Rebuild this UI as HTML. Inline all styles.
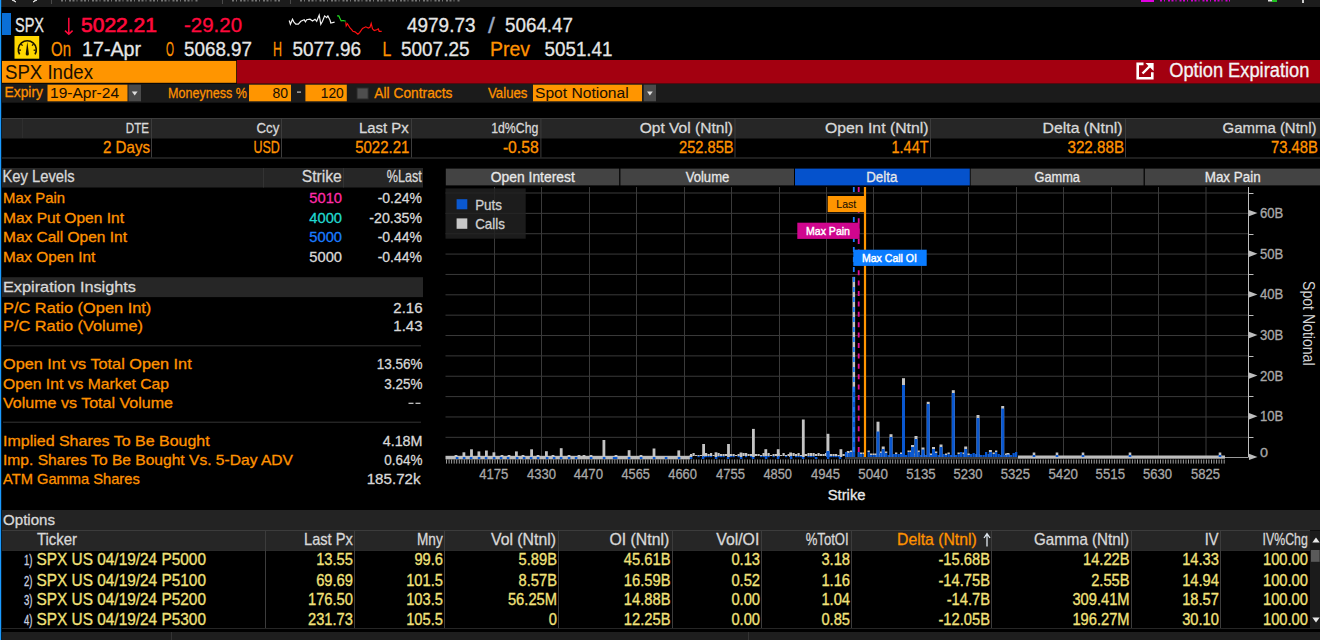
<!DOCTYPE html>
<html><head><meta charset="utf-8"><style>
html,body{margin:0;padding:0;background:#000;width:1320px;height:640px;overflow:hidden}
svg{display:block}
text{font-family:"Liberation Sans",sans-serif;white-space:pre}
</style></head><body>
<svg width="1320" height="640" viewBox="0 0 1320 640">
<rect x="0" y="0" width="1320" height="640" fill="#000" />
<rect x="0" y="0" width="1320" height="7" fill="#1c1c1c" />
<line x1="51.5" y1="0" x2="51.5" y2="4" stroke="#4a4a4a" stroke-width="1" />
<line x1="222.5" y1="0" x2="222.5" y2="4" stroke="#4a4a4a" stroke-width="1" />
<line x1="290.5" y1="0" x2="290.5" y2="4" stroke="#4a4a4a" stroke-width="1" />
<path d="M12,0 L16,2 L13.5,0 Z M37,0 L33,2 L35.5,0 Z" fill="#ddd" stroke="#ddd" stroke-width="1"/>
<line x1="61" y1="0.8" x2="198" y2="0.8" stroke="#9a9a9a" stroke-width="1.6" stroke-dasharray="2 2 1 3 2 1.5" opacity="0.7"/>
<line x1="232" y1="0.8" x2="280" y2="0.8" stroke="#9a9a9a" stroke-width="1.6" stroke-dasharray="2 2 1 3 2 1.5" opacity="0.7"/>
<line x1="300" y1="0.8" x2="460" y2="0.8" stroke="#9a9a9a" stroke-width="1.6" stroke-dasharray="2 2 1 3 2 1.5" opacity="0.7"/>
<rect x="1141" y="0" width="13" height="2" fill="#e000e0" />
<line x1="1160" y1="0.7" x2="1230" y2="0.7" stroke="#d000d0" stroke-width="1.4" stroke-dasharray="2 2 1 3 2 1.5"/>
<rect x="1268" y="0" width="4" height="1.5" fill="#ddd" />
<rect x="1272" y="0" width="5" height="2" fill="#20c020" />
<rect x="1302" y="0" width="2" height="3" fill="#ccc" />
<rect x="0" y="0" width="1.2" height="640" fill="#1a9aff" />
<rect x="2" y="13" width="9" height="22" fill="#0a6fd6" />
<text x="15.00" y="32.00" font-size="21.08" fill="#e6e6e6" stroke="#e6e6e6" stroke-width="0.3" font-weight="normal" textLength="29.02" lengthAdjust="spacingAndGlyphs">SPX</text>
<path d="M68.8,17.7 V33.6 M65,30.6 L68.8,34.2 L72.6,30.6" fill="none" stroke="#ff0a3c" stroke-width="1.5"/>
<text x="81.00" y="32.00" font-size="20.35" fill="#ff0a3c" stroke="#ff0a3c" stroke-width="0.65" font-weight="normal" textLength="76.00" lengthAdjust="spacingAndGlyphs">5022.21</text>
<text x="184.00" y="32.00" font-size="20.35" fill="#ff0a3c" stroke="#ff0a3c" stroke-width="0.3" font-weight="normal" textLength="58.01" lengthAdjust="spacingAndGlyphs">-29.20</text>
<text x="407.00" y="32.00" font-size="21.08" fill="#e6e6e6" stroke="#e6e6e6" stroke-width="0.3" font-weight="normal" textLength="68.50" lengthAdjust="spacingAndGlyphs">4979.73</text>
<text x="488.00" y="33.00" font-size="22.53" fill="#9aa8c0" stroke="#9aa8c0" stroke-width="0.3" font-weight="normal" textLength="6.95" lengthAdjust="spacingAndGlyphs">/</text>
<text x="505.00" y="32.00" font-size="21.08" fill="#e6e6e6" stroke="#e6e6e6" stroke-width="0.3" font-weight="normal" textLength="68.00" lengthAdjust="spacingAndGlyphs">5064.47</text>
<polyline points="289.2,20.5 290.4,24.2 292.5,19.2 293.8,21.8 295.8,24.2 298.3,24.2 300.8,21.3 304.2,19.7 305.4,21.8 306.7,19.7 310.0,19.2 312.5,20.9 315.0,19.2 316.7,21.3 319.2,15.1 320.8,24.2 322.5,21.3 324.6,15.9 326.7,17.6 327.9,15.9 330.0,20.1 330.8,23.0 334.6,22.2" fill="none" stroke="#f0f0f0" stroke-width="1.2"/>
<polyline points="337.1,15.9 338.8,15.9 340.0,18.4 341.2,20.9 343.3,20.5 345.8,21.3" fill="none" stroke="#22dd22" stroke-width="1.2"/>
<polyline points="345.8,22.2 346.2,25.9 347.5,23.8 350.0,28.0 351.7,29.7 352.9,31.3 355.0,31.8 357.9,34.2 359.6,32.6 362.5,28.4 365.8,26.8 368.3,28.0 370.0,27.2 371.2,23.4 372.5,28.8 374.2,30.5 376.7,29.7 378.3,28.8 379.2,31.3 381.7,31.3" fill="none" stroke="#ff1010" stroke-width="1.2"/>
<rect x="14.5" y="36" width="24.7" height="22.7" fill="#ffd700" />
<path d="M19.6,54.4 A9.0,9.0 0 1 1 35.0,54.4" fill="none" stroke="#1a1400" stroke-width="1.6"/>
<path d="M25.7,54.0 L27.3,41.8 L28.9,54.0 A1.6,1.6 0 0 1 25.7,54.0 Z" fill="#1a1400"/>
<g stroke="#1a1400" stroke-width="1.3"><line x1="19" y1="50.2" x2="21" y2="50.2"/><line x1="35.6" y1="50.2" x2="33.6" y2="50.2"/><line x1="21.2" y1="44.2" x2="22.6" y2="45.6"/><line x1="33.4" y1="44.2" x2="32" y2="45.6"/></g>
<text x="51.00" y="56.00" font-size="21.08" fill="#ff9200" stroke="#ff9200" stroke-width="0.3" font-weight="normal" textLength="19.98" lengthAdjust="spacingAndGlyphs">On</text>
<text x="82.00" y="56.00" font-size="21.08" fill="#e6e6e6" stroke="#e6e6e6" stroke-width="0.3" font-weight="normal" textLength="59.03" lengthAdjust="spacingAndGlyphs">17-Apr</text>
<text x="166.00" y="56.00" font-size="21.08" fill="#ff9200" stroke="#ff9200" stroke-width="0.3" font-weight="normal" textLength="7.98" lengthAdjust="spacingAndGlyphs">O</text>
<text x="184.00" y="56.00" font-size="21.08" fill="#e6e6e6" stroke="#e6e6e6" stroke-width="0.3" font-weight="normal" textLength="68.00" lengthAdjust="spacingAndGlyphs">5068.97</text>
<text x="273.00" y="56.00" font-size="21.08" fill="#ff9200" stroke="#ff9200" stroke-width="0.3" font-weight="normal" textLength="9.03" lengthAdjust="spacingAndGlyphs">H</text>
<text x="292.50" y="56.00" font-size="21.08" fill="#e6e6e6" stroke="#e6e6e6" stroke-width="0.3" font-weight="normal" textLength="68.50" lengthAdjust="spacingAndGlyphs">5077.96</text>
<text x="382.60" y="56.00" font-size="21.08" fill="#ff9200" stroke="#ff9200" stroke-width="0.3" font-weight="normal" textLength="8.82" lengthAdjust="spacingAndGlyphs">L</text>
<text x="401.00" y="56.00" font-size="21.08" fill="#e6e6e6" stroke="#e6e6e6" stroke-width="0.3" font-weight="normal" textLength="68.50" lengthAdjust="spacingAndGlyphs">5007.25</text>
<text x="490.00" y="56.00" font-size="21.08" fill="#ff9200" stroke="#ff9200" stroke-width="0.3" font-weight="normal" textLength="40.02" lengthAdjust="spacingAndGlyphs">Prev</text>
<text x="544.50" y="56.00" font-size="21.08" fill="#e6e6e6" stroke="#e6e6e6" stroke-width="0.3" font-weight="normal" textLength="68.00" lengthAdjust="spacingAndGlyphs">5051.41</text>
<rect x="236.9" y="60" width="1083.1" height="23.7" fill="#a30010" />
<rect x="2" y="60.9" width="234.2" height="21.9" fill="#ff9500" />
<text x="5.00" y="78.50" font-size="20.35" fill="#1a1000" stroke="#1a1000" stroke-width="0.05" font-weight="normal" textLength="88.00" lengthAdjust="spacingAndGlyphs">SPX Index</text>
<path d="M1143.5,63.9 H1137.7 V78.2 H1152.3 V72.2" fill="none" stroke="#fff" stroke-width="2.6"/>
<path d="M1142.5,73.5 L1150.5,65.5" stroke="#fff" stroke-width="2.4"/><path d="M1145.5,63 H1153.6 V71 Z" fill="#fff"/>
<text x="1169.20" y="77.40" font-size="19.33" fill="#f4f4f4" stroke="#f4f4f4" stroke-width="0.3" font-weight="normal" textLength="140.22" lengthAdjust="spacingAndGlyphs">Option Expiration</text>
<rect x="2" y="83.7" width="1318" height="19" fill="#1b1b1b" />
<text x="4.50" y="97.00" font-size="14.54" fill="#ff9200" stroke="#ff9200" stroke-width="0.3" font-weight="normal" textLength="38.48" lengthAdjust="spacingAndGlyphs">Expiry</text>
<rect x="47.5" y="84.7" width="80" height="16.6" fill="#ff9500" />
<text x="50.00" y="97.70" font-size="15.55" fill="#1a1000" stroke="#1a1000" stroke-width="0.05" font-weight="normal" textLength="69.03" lengthAdjust="spacingAndGlyphs">19-Apr-24</text>
<rect x="128.5" y="84.7" width="12.5" height="16.6" fill="#4a4a4a" />
<path d="M131.8,91.5 H137.6 L134.7,95.5 Z" fill="#ddd"/>
<text x="168.00" y="97.70" font-size="15.55" fill="#ff9200" stroke="#ff9200" stroke-width="0.3" font-weight="normal" textLength="79.01" lengthAdjust="spacingAndGlyphs">Moneyness %</text>
<rect x="249" y="84.7" width="42" height="16.6" fill="#ff9500" />
<text x="272.50" y="97.60" font-size="14.39" fill="#1a1000" stroke="#1a1000" stroke-width="0.05" font-weight="normal" textLength="15.53" lengthAdjust="spacingAndGlyphs">80</text>
<rect x="297" y="91.5" width="4" height="1.2" fill="#c8c8c8" />
<rect x="305.4" y="84.7" width="41.4" height="16.6" fill="#ff9500" />
<text x="320.80" y="97.60" font-size="14.39" fill="#1a1000" stroke="#1a1000" stroke-width="0.05" font-weight="normal" textLength="22.98" lengthAdjust="spacingAndGlyphs">120</text>
<rect x="357" y="88" width="11.2" height="11" fill="#4e4e4e" stroke="#2a2a2a" stroke-width="1"/>
<text x="374.30" y="97.60" font-size="15.41" fill="#ff9200" stroke="#ff9200" stroke-width="0.3" font-weight="normal" textLength="78.18" lengthAdjust="spacingAndGlyphs">All Contracts</text>
<text x="488.00" y="97.60" font-size="15.41" fill="#ff9200" stroke="#ff9200" stroke-width="0.3" font-weight="normal" textLength="39.48" lengthAdjust="spacingAndGlyphs">Values</text>
<rect x="533" y="84.7" width="109" height="16.6" fill="#ff9500" />
<text x="535.00" y="97.70" font-size="15.55" fill="#1a1000" stroke="#1a1000" stroke-width="0.05" font-weight="normal" textLength="93.69" lengthAdjust="spacingAndGlyphs">Spot Notional</text>
<rect x="643.7" y="84.7" width="12.3" height="16.6" fill="#4a4a4a" />
<path d="M647,91.5 H652.8 L649.9,95.5 Z" fill="#ddd"/>
<rect x="2" y="118" width="1318" height="20.5" fill="#262626" />
<line x1="2" y1="118.5" x2="1320" y2="118.5" stroke="#3c3c3c" stroke-width="1" />
<line x1="2" y1="158" x2="1320" y2="158" stroke="#3c3c3c" stroke-width="1" />
<line x1="151.5" y1="118" x2="151.5" y2="157.5" stroke="#3c3c3c" stroke-width="1" />
<line x1="281.5" y1="118" x2="281.5" y2="157.5" stroke="#3c3c3c" stroke-width="1" />
<line x1="411.5" y1="118" x2="411.5" y2="157.5" stroke="#3c3c3c" stroke-width="1" />
<line x1="540.9" y1="118" x2="540.9" y2="157.5" stroke="#3c3c3c" stroke-width="1" />
<line x1="735.0" y1="118" x2="735.0" y2="157.5" stroke="#3c3c3c" stroke-width="1" />
<line x1="930.5" y1="118" x2="930.5" y2="157.5" stroke="#3c3c3c" stroke-width="1" />
<line x1="1125.5" y1="118" x2="1125.5" y2="157.5" stroke="#3c3c3c" stroke-width="1" />
<line x1="22.5" y1="119" x2="22.5" y2="138" stroke="#2e2e2e" stroke-width="1" />
<text x="125.80" y="132.50" font-size="15.26" fill="#d8d8d8" stroke="#d8d8d8" stroke-width="0.3" font-weight="normal" textLength="23.20" lengthAdjust="spacingAndGlyphs">DTE</text>
<text x="256.50" y="132.50" font-size="15.26" fill="#d8d8d8" stroke="#d8d8d8" stroke-width="0.3" font-weight="normal" textLength="22.73" lengthAdjust="spacingAndGlyphs">Ccy</text>
<text x="359.00" y="132.50" font-size="15.26" fill="#d8d8d8" stroke="#d8d8d8" stroke-width="0.3" font-weight="normal" textLength="49.60" lengthAdjust="spacingAndGlyphs">Last Px</text>
<text x="491.20" y="132.50" font-size="15.26" fill="#d8d8d8" stroke="#d8d8d8" stroke-width="0.3" font-weight="normal" textLength="47.11" lengthAdjust="spacingAndGlyphs">1d%Chg</text>
<text x="639.70" y="132.50" font-size="15.26" fill="#d8d8d8" stroke="#d8d8d8" stroke-width="0.3" font-weight="normal" textLength="93.33" lengthAdjust="spacingAndGlyphs">Opt Vol (Ntnl)</text>
<text x="825.00" y="132.50" font-size="15.26" fill="#d8d8d8" stroke="#d8d8d8" stroke-width="0.3" font-weight="normal" textLength="103.47" lengthAdjust="spacingAndGlyphs">Open Int (Ntnl)</text>
<text x="1042.50" y="132.50" font-size="15.26" fill="#d8d8d8" stroke="#d8d8d8" stroke-width="0.3" font-weight="normal" textLength="80.03" lengthAdjust="spacingAndGlyphs">Delta (Ntnl)</text>
<text x="1222.50" y="132.50" font-size="15.26" fill="#d8d8d8" stroke="#d8d8d8" stroke-width="0.3" font-weight="normal" textLength="93.98" lengthAdjust="spacingAndGlyphs">Gamma (Ntnl)</text>
<text x="103.00" y="153.00" font-size="15.99" fill="#ff9200" stroke="#ff9200" stroke-width="0.3" font-weight="normal" textLength="47.04" lengthAdjust="spacingAndGlyphs">2 Days</text>
<text x="253.40" y="153.00" font-size="15.99" fill="#ff9200" stroke="#ff9200" stroke-width="0.3" font-weight="normal" textLength="26.32" lengthAdjust="spacingAndGlyphs">USD</text>
<text x="355.20" y="153.00" font-size="15.99" fill="#ff9200" stroke="#ff9200" stroke-width="0.3" font-weight="normal" textLength="54.10" lengthAdjust="spacingAndGlyphs">5022.21</text>
<text x="502.90" y="153.00" font-size="15.99" fill="#ff9200" stroke="#ff9200" stroke-width="0.3" font-weight="normal" textLength="35.79" lengthAdjust="spacingAndGlyphs">-0.58</text>
<text x="679.00" y="153.00" font-size="15.99" fill="#ff9200" stroke="#ff9200" stroke-width="0.3" font-weight="normal" textLength="54.61" lengthAdjust="spacingAndGlyphs">252.85B</text>
<text x="891.50" y="153.00" font-size="15.99" fill="#ff9200" stroke="#ff9200" stroke-width="0.3" font-weight="normal" textLength="37.03" lengthAdjust="spacingAndGlyphs">1.44T</text>
<text x="1067.50" y="153.00" font-size="15.99" fill="#ff9200" stroke="#ff9200" stroke-width="0.3" font-weight="normal" textLength="56.51" lengthAdjust="spacingAndGlyphs">322.88B</text>
<text x="1271.00" y="153.00" font-size="15.99" fill="#ff9200" stroke="#ff9200" stroke-width="0.3" font-weight="normal" textLength="46.99" lengthAdjust="spacingAndGlyphs">73.48B</text>
<rect x="2" y="168" width="421" height="19.5" fill="#262626" />
<line x1="263.5" y1="168" x2="263.5" y2="187.5" stroke="#333" stroke-width="1" />
<line x1="343.5" y1="168" x2="343.5" y2="187.5" stroke="#333" stroke-width="1" />
<text x="2.50" y="182.30" font-size="15.70" fill="#d8d8d8" stroke="#d8d8d8" stroke-width="0.3" font-weight="normal" textLength="72.23" lengthAdjust="spacingAndGlyphs">Key Levels</text>
<text x="301.70" y="182.30" font-size="15.70" fill="#d8d8d8" stroke="#d8d8d8" stroke-width="0.3" font-weight="normal" textLength="40.02" lengthAdjust="spacingAndGlyphs">Strike</text>
<text x="386.70" y="182.30" font-size="15.70" fill="#d8d8d8" stroke="#d8d8d8" stroke-width="0.3" font-weight="normal" textLength="34.99" lengthAdjust="spacingAndGlyphs">%Last</text>
<text x="3.00" y="202.70" font-size="14.54" fill="#ff9200" stroke="#ff9200" stroke-width="0.3" font-weight="normal" textLength="61.98" lengthAdjust="spacingAndGlyphs">Max Pain</text>
<text x="309.30" y="202.70" font-size="14.54" fill="#ff2aa8" stroke="#ff2aa8" stroke-width="0.3" font-weight="normal" textLength="32.70" lengthAdjust="spacingAndGlyphs">5010</text>
<text x="377.70" y="202.70" font-size="14.54" fill="#d8d8d8" stroke="#d8d8d8" stroke-width="0.3" font-weight="normal" textLength="44.28" lengthAdjust="spacingAndGlyphs">-0.24%</text>
<text x="3.00" y="222.70" font-size="14.54" fill="#ff9200" stroke="#ff9200" stroke-width="0.3" font-weight="normal" textLength="121.03" lengthAdjust="spacingAndGlyphs">Max Put Open Int</text>
<text x="309.30" y="222.70" font-size="14.54" fill="#20d8d0" stroke="#20d8d0" stroke-width="0.3" font-weight="normal" textLength="32.70" lengthAdjust="spacingAndGlyphs">4000</text>
<text x="369.30" y="222.70" font-size="14.54" fill="#d8d8d8" stroke="#d8d8d8" stroke-width="0.3" font-weight="normal" textLength="52.70" lengthAdjust="spacingAndGlyphs">-20.35%</text>
<text x="3.00" y="242.30" font-size="14.54" fill="#ff9200" stroke="#ff9200" stroke-width="0.3" font-weight="normal" textLength="123.98" lengthAdjust="spacingAndGlyphs">Max Call Open Int</text>
<text x="309.30" y="242.30" font-size="14.54" fill="#1a7cff" stroke="#1a7cff" stroke-width="0.3" font-weight="normal" textLength="32.70" lengthAdjust="spacingAndGlyphs">5000</text>
<text x="377.70" y="242.30" font-size="14.54" fill="#d8d8d8" stroke="#d8d8d8" stroke-width="0.3" font-weight="normal" textLength="44.28" lengthAdjust="spacingAndGlyphs">-0.44%</text>
<text x="3.00" y="261.70" font-size="14.54" fill="#ff9200" stroke="#ff9200" stroke-width="0.3" font-weight="normal" textLength="92.27" lengthAdjust="spacingAndGlyphs">Max Open Int</text>
<text x="309.30" y="261.70" font-size="14.54" fill="#d8d8d8" stroke="#d8d8d8" stroke-width="0.3" font-weight="normal" textLength="32.70" lengthAdjust="spacingAndGlyphs">5000</text>
<text x="377.70" y="261.70" font-size="14.54" fill="#d8d8d8" stroke="#d8d8d8" stroke-width="0.3" font-weight="normal" textLength="44.28" lengthAdjust="spacingAndGlyphs">-0.44%</text>
<rect x="2" y="277.2" width="421" height="19.9" fill="#262626" />
<text x="3.00" y="291.70" font-size="15.55" fill="#d8d8d8" stroke="#d8d8d8" stroke-width="0.3" font-weight="normal" textLength="133.02" lengthAdjust="spacingAndGlyphs">Expiration Insights</text>
<text x="3.00" y="312.70" font-size="14.97" fill="#ff9200" stroke="#ff9200" stroke-width="0.3" font-weight="normal" textLength="148.29" lengthAdjust="spacingAndGlyphs">P/C Ratio (Open Int)</text>
<text x="393.30" y="312.70" font-size="14.97" fill="#d8d8d8" stroke="#d8d8d8" stroke-width="0.3" font-weight="normal" textLength="29.22" lengthAdjust="spacingAndGlyphs">2.16</text>
<text x="3.00" y="330.70" font-size="14.97" fill="#ff9200" stroke="#ff9200" stroke-width="0.3" font-weight="normal" textLength="139.98" lengthAdjust="spacingAndGlyphs">P/C Ratio (Volume)</text>
<text x="393.30" y="330.70" font-size="14.97" fill="#d8d8d8" stroke="#d8d8d8" stroke-width="0.3" font-weight="normal" textLength="29.22" lengthAdjust="spacingAndGlyphs">1.43</text>
<text x="3.00" y="369.30" font-size="14.97" fill="#ff9200" stroke="#ff9200" stroke-width="0.3" font-weight="normal" textLength="188.69" lengthAdjust="spacingAndGlyphs">Open Int vs Total Open Int</text>
<text x="376.70" y="369.30" font-size="14.97" fill="#d8d8d8" stroke="#d8d8d8" stroke-width="0.3" font-weight="normal" textLength="45.82" lengthAdjust="spacingAndGlyphs">13.56%</text>
<text x="3.00" y="388.90" font-size="14.97" fill="#ff9200" stroke="#ff9200" stroke-width="0.3" font-weight="normal" textLength="166.00" lengthAdjust="spacingAndGlyphs">Open Int vs Market Cap</text>
<text x="384.30" y="388.90" font-size="14.97" fill="#d8d8d8" stroke="#d8d8d8" stroke-width="0.3" font-weight="normal" textLength="38.21" lengthAdjust="spacingAndGlyphs">3.25%</text>
<text x="3.00" y="407.50" font-size="14.97" fill="#ff9200" stroke="#ff9200" stroke-width="0.3" font-weight="normal" textLength="169.98" lengthAdjust="spacingAndGlyphs">Volume vs Total Volume</text>
<rect x="408.5" y="402.7" width="5" height="1.2" fill="#d0d0d0" />
<rect x="415.5" y="402.7" width="5" height="1.2" fill="#d0d0d0" />
<text x="3.00" y="445.60" font-size="14.97" fill="#ff9200" stroke="#ff9200" stroke-width="0.3" font-weight="normal" textLength="206.69" lengthAdjust="spacingAndGlyphs">Implied Shares To Be Bought</text>
<text x="382.70" y="445.60" font-size="14.97" fill="#d8d8d8" stroke="#d8d8d8" stroke-width="0.3" font-weight="normal" textLength="39.79" lengthAdjust="spacingAndGlyphs">4.18M</text>
<text x="3.00" y="465.40" font-size="14.97" fill="#ff9200" stroke="#ff9200" stroke-width="0.3" font-weight="normal" textLength="289.96" lengthAdjust="spacingAndGlyphs">Imp. Shares To Be Bought Vs. 5-Day ADV</text>
<text x="384.30" y="465.40" font-size="14.97" fill="#d8d8d8" stroke="#d8d8d8" stroke-width="0.3" font-weight="normal" textLength="38.21" lengthAdjust="spacingAndGlyphs">0.64%</text>
<text x="3.00" y="484.00" font-size="14.97" fill="#ff9200" stroke="#ff9200" stroke-width="0.3" font-weight="normal" textLength="136.73" lengthAdjust="spacingAndGlyphs">ATM Gamma Shares</text>
<text x="366.70" y="484.00" font-size="14.97" fill="#d8d8d8" stroke="#d8d8d8" stroke-width="0.3" font-weight="normal" textLength="53.90" lengthAdjust="spacingAndGlyphs">185.72k</text>
<line x1="3" y1="345.8" x2="421" y2="345.8" stroke="#353535" stroke-width="1" />
<line x1="3" y1="422.2" x2="421" y2="422.2" stroke="#353535" stroke-width="1" />
<rect x="445.8" y="168.6" width="173.40000000000003" height="16.8" fill="#434343" />
<text x="490.70" y="181.50" font-size="14.83" fill="#e8e8e8" stroke="#e8e8e8" stroke-width="0.3" font-weight="normal" textLength="84.19" lengthAdjust="spacingAndGlyphs">Open Interest</text>
<rect x="620.4" y="168.6" width="173.60000000000002" height="16.8" fill="#434343" />
<text x="685.70" y="181.50" font-size="14.83" fill="#e8e8e8" stroke="#e8e8e8" stroke-width="0.3" font-weight="normal" textLength="43.61" lengthAdjust="spacingAndGlyphs">Volume</text>
<rect x="795" y="168.6" width="174.79999999999995" height="16.8" fill="#0552cc" />
<text x="866.20" y="181.50" font-size="14.83" fill="#e8e8e8" stroke="#e8e8e8" stroke-width="0.3" font-weight="normal" textLength="31.23" lengthAdjust="spacingAndGlyphs">Delta</text>
<rect x="970.6" y="168.6" width="172.9999999999999" height="16.8" fill="#434343" />
<text x="1034.50" y="181.50" font-size="14.83" fill="#e8e8e8" stroke="#e8e8e8" stroke-width="0.3" font-weight="normal" textLength="45.45" lengthAdjust="spacingAndGlyphs">Gamma</text>
<rect x="1144.8" y="168.6" width="175.20000000000005" height="16.8" fill="#434343" />
<text x="1204.70" y="181.50" font-size="14.83" fill="#e8e8e8" stroke="#e8e8e8" stroke-width="0.3" font-weight="normal" textLength="55.98" lengthAdjust="spacingAndGlyphs">Max Pain</text>
<line x1="494.5" y1="187" x2="494.5" y2="457" stroke="#3a3a3a" stroke-width="1" />
<line x1="541.5" y1="187" x2="541.5" y2="457" stroke="#3a3a3a" stroke-width="1" />
<line x1="589.5" y1="187" x2="589.5" y2="457" stroke="#3a3a3a" stroke-width="1" />
<line x1="636.5" y1="187" x2="636.5" y2="457" stroke="#3a3a3a" stroke-width="1" />
<line x1="684.5" y1="187" x2="684.5" y2="457" stroke="#3a3a3a" stroke-width="1" />
<line x1="731.5" y1="187" x2="731.5" y2="457" stroke="#3a3a3a" stroke-width="1" />
<line x1="779.5" y1="187" x2="779.5" y2="457" stroke="#3a3a3a" stroke-width="1" />
<line x1="826.5" y1="187" x2="826.5" y2="457" stroke="#3a3a3a" stroke-width="1" />
<line x1="873.5" y1="187" x2="873.5" y2="457" stroke="#3a3a3a" stroke-width="1" />
<line x1="921.5" y1="187" x2="921.5" y2="457" stroke="#3a3a3a" stroke-width="1" />
<line x1="968.5" y1="187" x2="968.5" y2="457" stroke="#3a3a3a" stroke-width="1" />
<line x1="1016.5" y1="187" x2="1016.5" y2="457" stroke="#3a3a3a" stroke-width="1" />
<line x1="1063.5" y1="187" x2="1063.5" y2="457" stroke="#3a3a3a" stroke-width="1" />
<line x1="1111.5" y1="187" x2="1111.5" y2="457" stroke="#3a3a3a" stroke-width="1" />
<line x1="1158.5" y1="187" x2="1158.5" y2="457" stroke="#3a3a3a" stroke-width="1" />
<line x1="1206.0" y1="187" x2="1206.0" y2="457" stroke="#3a3a3a" stroke-width="1" />
<line x1="445.5" y1="193.0" x2="1248" y2="193.0" stroke="#3a3a3a" stroke-width="1" />
<line x1="445.5" y1="213.36" x2="1248" y2="213.36" stroke="#3a3a3a" stroke-width="1" />
<line x1="445.5" y1="233.72" x2="1248" y2="233.72" stroke="#3a3a3a" stroke-width="1" />
<line x1="445.5" y1="254.07999999999998" x2="1248" y2="254.07999999999998" stroke="#3a3a3a" stroke-width="1" />
<line x1="445.5" y1="274.44" x2="1248" y2="274.44" stroke="#3a3a3a" stroke-width="1" />
<line x1="445.5" y1="294.8" x2="1248" y2="294.8" stroke="#3a3a3a" stroke-width="1" />
<line x1="445.5" y1="315.15999999999997" x2="1248" y2="315.15999999999997" stroke="#3a3a3a" stroke-width="1" />
<line x1="445.5" y1="335.52" x2="1248" y2="335.52" stroke="#3a3a3a" stroke-width="1" />
<line x1="445.5" y1="355.88" x2="1248" y2="355.88" stroke="#3a3a3a" stroke-width="1" />
<line x1="445.5" y1="376.24" x2="1248" y2="376.24" stroke="#3a3a3a" stroke-width="1" />
<line x1="445.5" y1="396.6" x2="1248" y2="396.6" stroke="#3a3a3a" stroke-width="1" />
<line x1="445.5" y1="416.96" x2="1248" y2="416.96" stroke="#3a3a3a" stroke-width="1" />
<line x1="445.5" y1="437.32" x2="1248" y2="437.32" stroke="#3a3a3a" stroke-width="1" />
<rect x="445.5" y="188.4" width="80.2" height="50.3" fill="#222222" fill-opacity="0.83"/>
<rect x="456.6" y="199.2" width="10.7" height="10.1" fill="#0a58d0" />
<rect x="456.6" y="218.4" width="10.7" height="10.4" fill="#c8c8c8" />
<text x="475.20" y="209.80" font-size="14.24" fill="#d0d0d0" stroke="#d0d0d0" stroke-width="0.3" font-weight="normal" textLength="26.81" lengthAdjust="spacingAndGlyphs">Puts</text>
<text x="475.20" y="229.00" font-size="14.10" fill="#d0d0d0" stroke="#d0d0d0" stroke-width="0.3" font-weight="normal" textLength="29.77" lengthAdjust="spacingAndGlyphs">Calls</text>
<line x1="1248.5" y1="187" x2="1248.5" y2="457.5" stroke="#bdbdbd" stroke-width="1" />
<path d="M1249,209.9 L1257.5,213.1 L1249,216.3 Z" fill="#bdbdbd"/>
<path d="M1249,250.5 L1257.5,253.7 L1249,256.9 Z" fill="#bdbdbd"/>
<path d="M1249,291.2 L1257.5,294.4 L1249,297.6 Z" fill="#bdbdbd"/>
<path d="M1249,331.8 L1257.5,335.0 L1249,338.2 Z" fill="#bdbdbd"/>
<path d="M1249,372.4 L1257.5,375.6 L1249,378.8 Z" fill="#bdbdbd"/>
<path d="M1249,413.1 L1257.5,416.2 L1249,419.4 Z" fill="#bdbdbd"/>
<path d="M1249,453.7 L1257.5,456.9 L1249,460.1 Z" fill="#bdbdbd"/>
<line x1="1249" y1="193.5" x2="1253.5" y2="193.5" stroke="#bdbdbd" stroke-width="1" />
<line x1="1249" y1="234.5" x2="1253.5" y2="234.5" stroke="#bdbdbd" stroke-width="1" />
<line x1="1249" y1="274.5" x2="1253.5" y2="274.5" stroke="#bdbdbd" stroke-width="1" />
<line x1="1249" y1="315.5" x2="1253.5" y2="315.5" stroke="#bdbdbd" stroke-width="1" />
<line x1="1249" y1="356.5" x2="1253.5" y2="356.5" stroke="#bdbdbd" stroke-width="1" />
<line x1="1249" y1="396.5" x2="1253.5" y2="396.5" stroke="#bdbdbd" stroke-width="1" />
<line x1="1249" y1="437.5" x2="1253.5" y2="437.5" stroke="#bdbdbd" stroke-width="1" />
<text x="1260.00" y="218.00" font-size="13.81" fill="#a8a8a8" stroke="#a8a8a8" stroke-width="0.3" font-weight="normal" textLength="23.39" lengthAdjust="spacingAndGlyphs">60B</text>
<text x="1260.00" y="258.63" font-size="13.81" fill="#a8a8a8" stroke="#a8a8a8" stroke-width="0.3" font-weight="normal" textLength="23.39" lengthAdjust="spacingAndGlyphs">50B</text>
<text x="1260.00" y="299.26" font-size="13.81" fill="#a8a8a8" stroke="#a8a8a8" stroke-width="0.3" font-weight="normal" textLength="23.39" lengthAdjust="spacingAndGlyphs">40B</text>
<text x="1260.00" y="339.89" font-size="13.81" fill="#a8a8a8" stroke="#a8a8a8" stroke-width="0.3" font-weight="normal" textLength="23.39" lengthAdjust="spacingAndGlyphs">30B</text>
<text x="1260.00" y="380.52" font-size="13.81" fill="#a8a8a8" stroke="#a8a8a8" stroke-width="0.3" font-weight="normal" textLength="23.39" lengthAdjust="spacingAndGlyphs">20B</text>
<text x="1260.00" y="421.15" font-size="13.81" fill="#a8a8a8" stroke="#a8a8a8" stroke-width="0.3" font-weight="normal" textLength="23.39" lengthAdjust="spacingAndGlyphs">10B</text>
<text x="1260.00" y="456.60" font-size="12.79" fill="#a8a8a8" stroke="#a8a8a8" stroke-width="0.3" font-weight="normal" textLength="8.02" lengthAdjust="spacingAndGlyphs">0</text>
<g transform="translate(1302.7,281) rotate(90)">
<text x="0.00" y="0" font-size="15.99" fill="#d4d4d4" textLength="84.59" lengthAdjust="spacingAndGlyphs">Spot Notional</text></g>
<text x="479.20" y="479.40" font-size="14.54" fill="#a8a8a8" stroke="#a8a8a8" stroke-width="0.3" font-weight="normal" textLength="29.20" lengthAdjust="spacingAndGlyphs">4175</text>
<text x="527.00" y="479.40" font-size="14.54" fill="#a8a8a8" stroke="#a8a8a8" stroke-width="0.3" font-weight="normal" textLength="29.00" lengthAdjust="spacingAndGlyphs">4330</text>
<text x="573.70" y="479.40" font-size="14.54" fill="#a8a8a8" stroke="#a8a8a8" stroke-width="0.3" font-weight="normal" textLength="29.30" lengthAdjust="spacingAndGlyphs">4470</text>
<text x="621.50" y="479.40" font-size="14.54" fill="#a8a8a8" stroke="#a8a8a8" stroke-width="0.3" font-weight="normal" textLength="28.50" lengthAdjust="spacingAndGlyphs">4565</text>
<text x="668.20" y="479.40" font-size="14.54" fill="#a8a8a8" stroke="#a8a8a8" stroke-width="0.3" font-weight="normal" textLength="28.80" lengthAdjust="spacingAndGlyphs">4660</text>
<text x="716.00" y="479.40" font-size="14.54" fill="#a8a8a8" stroke="#a8a8a8" stroke-width="0.3" font-weight="normal" textLength="29.00" lengthAdjust="spacingAndGlyphs">4755</text>
<text x="763.40" y="479.40" font-size="14.54" fill="#a8a8a8" stroke="#a8a8a8" stroke-width="0.3" font-weight="normal" textLength="28.60" lengthAdjust="spacingAndGlyphs">4850</text>
<text x="810.90" y="479.40" font-size="14.54" fill="#a8a8a8" stroke="#a8a8a8" stroke-width="0.3" font-weight="normal" textLength="29.10" lengthAdjust="spacingAndGlyphs">4945</text>
<text x="858.20" y="479.40" font-size="14.54" fill="#a8a8a8" stroke="#a8a8a8" stroke-width="0.3" font-weight="normal" textLength="29.80" lengthAdjust="spacingAndGlyphs">5040</text>
<text x="906.20" y="479.40" font-size="14.54" fill="#a8a8a8" stroke="#a8a8a8" stroke-width="0.3" font-weight="normal" textLength="29.40" lengthAdjust="spacingAndGlyphs">5135</text>
<text x="953.50" y="479.40" font-size="14.54" fill="#a8a8a8" stroke="#a8a8a8" stroke-width="0.3" font-weight="normal" textLength="29.00" lengthAdjust="spacingAndGlyphs">5230</text>
<text x="1000.70" y="479.40" font-size="14.54" fill="#a8a8a8" stroke="#a8a8a8" stroke-width="0.3" font-weight="normal" textLength="29.30" lengthAdjust="spacingAndGlyphs">5325</text>
<text x="1048.40" y="479.40" font-size="14.54" fill="#a8a8a8" stroke="#a8a8a8" stroke-width="0.3" font-weight="normal" textLength="29.60" lengthAdjust="spacingAndGlyphs">5420</text>
<text x="1095.60" y="479.40" font-size="14.54" fill="#a8a8a8" stroke="#a8a8a8" stroke-width="0.3" font-weight="normal" textLength="29.40" lengthAdjust="spacingAndGlyphs">5515</text>
<text x="1142.90" y="479.40" font-size="14.54" fill="#a8a8a8" stroke="#a8a8a8" stroke-width="0.3" font-weight="normal" textLength="29.10" lengthAdjust="spacingAndGlyphs">5630</text>
<text x="1191.00" y="479.40" font-size="14.54" fill="#a8a8a8" stroke="#a8a8a8" stroke-width="0.3" font-weight="normal" textLength="29.00" lengthAdjust="spacingAndGlyphs">5825</text>
<text x="827.70" y="500.40" font-size="14.24" fill="#e8e8e8" stroke="#e8e8e8" stroke-width="0.3" font-weight="normal" textLength="37.82" lengthAdjust="spacingAndGlyphs">Strike</text>
<rect x="445.5" y="455.8" width="244.5" height="3.6" fill="#bdbdbd" />
<rect x="1018" y="455.5" width="207" height="3.2" fill="#bdbdbd" />
<line x1="1225" y1="457.5" x2="1248" y2="457.5" stroke="#9a9a9a" stroke-width="1" />
<path d="M446.5,459.5 V463.6 M449.1,459.5 V463.6 M451.6,459.5 V463.6 M454.2,459.5 V463.6 M456.7,459.5 V463.6 M459.3,459.5 V463.6 M461.8,459.5 V463.6 M464.4,459.5 V463.6 M466.9,459.5 V463.6 M469.5,459.5 V463.6 M472.0,459.5 V463.6 M474.6,459.5 V463.6 M477.1,459.5 V463.6 M479.7,459.5 V463.6 M482.2,459.5 V463.6 M484.8,459.5 V463.6 M487.3,459.5 V463.6 M489.9,459.5 V463.6 M492.4,459.5 V463.6 M495.0,459.5 V463.6 M497.5,459.5 V463.6 M500.1,459.5 V463.6 M502.6,459.5 V463.6 M505.2,459.5 V463.6 M507.7,459.5 V463.6 M510.3,459.5 V463.6 M512.8,459.5 V463.6 M515.4,459.5 V463.6 M517.9,459.5 V463.6 M520.5,459.5 V463.6 M523.0,459.5 V463.6 M525.6,459.5 V463.6 M528.1,459.5 V463.6 M530.6,459.5 V463.6 M533.2,459.5 V463.6 M535.7,459.5 V463.6 M538.3,459.5 V463.6 M540.8,459.5 V463.6 M543.4,459.5 V463.6 M545.9,459.5 V463.6 M548.5,459.5 V463.6 M551.0,459.5 V463.6 M553.6,459.5 V463.6 M556.1,459.5 V463.6 M558.7,459.5 V463.6 M561.2,459.5 V463.6 M563.8,459.5 V463.6 M566.3,459.5 V463.6 M568.9,459.5 V463.6 M571.4,459.5 V463.6 M574.0,459.5 V463.6 M576.5,459.5 V463.6 M579.1,459.5 V463.6 M581.6,459.5 V463.6 M584.2,459.5 V463.6 M586.7,459.5 V463.6 M589.3,459.5 V463.6 M591.8,459.5 V463.6 M594.4,459.5 V463.6 M596.9,459.5 V463.6 M599.5,459.5 V463.6 M602.0,459.5 V463.6 M604.6,459.5 V463.6 M607.1,459.5 V463.6 M609.7,459.5 V463.6 M612.2,459.5 V463.6 M614.8,459.5 V463.6 M617.3,459.5 V463.6 M619.9,459.5 V463.6 M622.4,459.5 V463.6 M625.0,459.5 V463.6 M627.5,459.5 V463.6 M630.1,459.5 V463.6 M632.6,459.5 V463.6 M635.2,459.5 V463.6 M637.7,459.5 V463.6 M640.3,459.5 V463.6 M642.8,459.5 V463.6 M645.4,459.5 V463.6 M647.9,459.5 V463.6 M650.5,459.5 V463.6 M653.0,459.5 V463.6 M655.6,459.5 V463.6 M658.1,459.5 V463.6 M660.7,459.5 V463.6 M663.2,459.5 V463.6 M665.8,459.5 V463.6 M668.3,459.5 V463.6 M670.9,459.5 V463.6 M673.4,459.5 V463.6 M676.0,459.5 V463.6 M678.5,459.5 V463.6 M681.1,459.5 V463.6 M683.6,459.5 V463.6 M686.2,459.5 V463.6 M688.7,459.5 V463.6 M691.3,459.5 V463.6 M693.8,459.5 V463.6 M696.4,459.5 V463.6 M698.9,459.5 V463.6 M701.5,459.5 V463.6 M704.0,459.5 V463.6 M706.6,459.5 V463.6 M709.1,459.5 V463.6 M711.7,459.5 V463.6 M714.2,459.5 V463.6 M716.8,459.5 V463.6 M719.3,459.5 V463.6 M721.9,459.5 V463.6 M724.4,459.5 V463.6 M727.0,459.5 V463.6 M729.5,459.5 V463.6 M732.1,459.5 V463.6 M734.6,459.5 V463.6 M737.2,459.5 V463.6 M739.7,459.5 V463.6 M742.3,459.5 V463.6 M744.8,459.5 V463.6 M747.4,459.5 V463.6 M749.9,459.5 V463.6 M752.5,459.5 V463.6 M755.0,459.5 V463.6 M757.6,459.5 V463.6 M760.1,459.5 V463.6 M762.7,459.5 V463.6 M765.2,459.5 V463.6 M767.8,459.5 V463.6 M770.3,459.5 V463.6 M772.9,459.5 V463.6 M775.4,459.5 V463.6 M778.0,459.5 V463.6 M780.5,459.5 V463.6 M783.1,459.5 V463.6 M785.6,459.5 V463.6 M788.2,459.5 V463.6 M790.7,459.5 V463.6 M793.3,459.5 V463.6 M795.8,459.5 V463.6 M798.4,459.5 V463.6 M800.9,459.5 V463.6 M803.5,459.5 V463.6 M806.0,459.5 V463.6 M808.6,459.5 V463.6 M811.1,459.5 V463.6 M813.7,459.5 V463.6 M816.2,459.5 V463.6 M818.8,459.5 V463.6 M821.3,459.5 V463.6 M823.9,459.5 V463.6 M826.4,459.5 V463.6 M829.0,459.5 V463.6 M831.5,459.5 V463.6 M834.1,459.5 V463.6 M836.6,459.5 V463.6 M839.2,459.5 V463.6 M841.7,459.5 V463.6 M844.3,459.5 V463.6 M846.8,459.5 V463.6 M849.4,459.5 V463.6 M851.9,459.5 V463.6 M854.5,459.5 V463.6 M857.0,459.5 V463.6 M859.6,459.5 V463.6 M862.1,459.5 V463.6 M864.7,459.5 V463.6 M867.2,459.5 V463.6 M869.8,459.5 V463.6 M872.3,459.5 V463.6 M874.9,459.5 V463.6 M877.4,459.5 V463.6 M880.0,459.5 V463.6 M882.5,459.5 V463.6 M885.1,459.5 V463.6 M887.6,459.5 V463.6 M890.2,459.5 V463.6 M892.7,459.5 V463.6 M895.3,459.5 V463.6 M897.8,459.5 V463.6 M900.4,459.5 V463.6 M902.9,459.5 V463.6 M905.5,459.5 V463.6 M908.0,459.5 V463.6 M910.6,459.5 V463.6 M913.1,459.5 V463.6 M915.7,459.5 V463.6 M918.2,459.5 V463.6 M920.8,459.5 V463.6 M923.3,459.5 V463.6 M925.9,459.5 V463.6 M928.4,459.5 V463.6 M931.0,459.5 V463.6 M933.5,459.5 V463.6 M936.1,459.5 V463.6 M938.6,459.5 V463.6 M941.2,459.5 V463.6 M943.7,459.5 V463.6 M946.3,459.5 V463.6 M948.8,459.5 V463.6 M951.4,459.5 V463.6 M953.9,459.5 V463.6 M956.5,459.5 V463.6 M959.0,459.5 V463.6 M961.6,459.5 V463.6 M964.1,459.5 V463.6 M966.7,459.5 V463.6 M969.2,459.5 V463.6 M971.8,459.5 V463.6 M974.3,459.5 V463.6 M976.9,459.5 V463.6 M979.4,459.5 V463.6 M982.0,459.5 V463.6 M984.5,459.5 V463.6 M987.1,459.5 V463.6 M989.6,459.5 V463.6 M992.2,459.5 V463.6 M994.7,459.5 V463.6 M997.3,459.5 V463.6 M999.8,459.5 V463.6 M1002.4,459.5 V463.6 M1004.9,459.5 V463.6 M1007.5,459.5 V463.6 M1010.0,459.5 V463.6 M1012.6,459.5 V463.6 M1015.1,459.5 V463.6 M1017.7,459.5 V463.6 M1020.2,459.5 V463.6 M1022.8,459.5 V463.6 M1025.3,459.5 V463.6 M1027.9,459.5 V463.6 M1030.4,459.5 V463.6 M1033.0,459.5 V463.6 M1035.5,459.5 V463.6 M1038.1,459.5 V463.6 M1040.6,459.5 V463.6 M1043.2,459.5 V463.6 M1045.7,459.5 V463.6 M1048.3,459.5 V463.6 M1050.8,459.5 V463.6 M1053.4,459.5 V463.6 M1055.9,459.5 V463.6 M1058.5,459.5 V463.6 M1061.0,459.5 V463.6 M1063.6,459.5 V463.6 M1066.1,459.5 V463.6 M1068.7,459.5 V463.6 M1071.2,459.5 V463.6 M1073.8,459.5 V463.6 M1076.3,459.5 V463.6 M1078.9,459.5 V463.6 M1081.4,459.5 V463.6 M1084.0,459.5 V463.6 M1086.5,459.5 V463.6 M1089.1,459.5 V463.6 M1091.6,459.5 V463.6 M1094.2,459.5 V463.6 M1096.7,459.5 V463.6 M1099.3,459.5 V463.6 M1101.8,459.5 V463.6 M1104.4,459.5 V463.6 M1106.9,459.5 V463.6 M1109.5,459.5 V463.6 M1112.0,459.5 V463.6 M1114.6,459.5 V463.6 M1117.1,459.5 V463.6 M1119.7,459.5 V463.6 M1122.2,459.5 V463.6 M1124.8,459.5 V463.6 M1127.3,459.5 V463.6 M1129.9,459.5 V463.6 M1132.4,459.5 V463.6 M1135.0,459.5 V463.6 M1137.5,459.5 V463.6 M1140.1,459.5 V463.6 M1142.6,459.5 V463.6 M1145.2,459.5 V463.6 M1147.7,459.5 V463.6 M1150.3,459.5 V463.6 M1152.8,459.5 V463.6 M1155.4,459.5 V463.6 M1157.9,459.5 V463.6 M1160.5,459.5 V463.6 M1163.0,459.5 V463.6 M1165.6,459.5 V463.6 M1168.1,459.5 V463.6 M1170.7,459.5 V463.6 M1173.2,459.5 V463.6 M1175.8,459.5 V463.6 M1178.3,459.5 V463.6 M1180.9,459.5 V463.6 M1183.4,459.5 V463.6 M1186.0,459.5 V463.6 M1188.5,459.5 V463.6 M1191.1,459.5 V463.6 M1193.6,459.5 V463.6 M1196.2,459.5 V463.6 M1198.7,459.5 V463.6 M1201.3,459.5 V463.6 M1203.8,459.5 V463.6 M1206.4,459.5 V463.6 M1208.9,459.5 V463.6 M1211.5,459.5 V463.6 M1214.0,459.5 V463.6 M1216.6,459.5 V463.6 M1219.1,459.5 V463.6 M1221.7,459.5 V463.6 M1224.2,459.5 V463.6" stroke="#9c9c9c" stroke-width="1"/>
<rect x="455.8" y="457" width="2.6" height="2" fill="#0a58d0" />
<rect x="462.8" y="457" width="2.6" height="2" fill="#0a58d0" />
<rect x="469.8" y="457" width="2.6" height="2" fill="#0a58d0" />
<rect x="477.8" y="457" width="2.6" height="2" fill="#0a58d0" />
<rect x="484.8" y="457" width="2.6" height="2" fill="#0a58d0" />
<rect x="492.8" y="457" width="2.6" height="2" fill="#0a58d0" />
<rect x="499.8" y="457" width="2.6" height="2" fill="#0a58d0" />
<rect x="506.8" y="457" width="2.6" height="2" fill="#0a58d0" />
<rect x="515.8" y="457" width="2.6" height="2" fill="#0a58d0" />
<rect x="522.8" y="457" width="2.6" height="2" fill="#0a58d0" />
<rect x="529.8" y="457" width="2.6" height="2" fill="#0a58d0" />
<rect x="536.8" y="457" width="2.6" height="2" fill="#0a58d0" />
<rect x="545.8" y="457" width="2.6" height="2" fill="#0a58d0" />
<rect x="552.8" y="457" width="2.6" height="2" fill="#0a58d0" />
<rect x="559.8" y="457" width="2.6" height="2" fill="#0a58d0" />
<rect x="567.8" y="457" width="2.6" height="2" fill="#0a58d0" />
<rect x="574.8" y="457" width="2.6" height="2" fill="#0a58d0" />
<rect x="589.8" y="457" width="2.6" height="2" fill="#0a58d0" />
<rect x="602.8" y="457" width="2.6" height="2" fill="#0a58d0" />
<rect x="612.8" y="457" width="2.6" height="2" fill="#0a58d0" />
<rect x="614.8" y="457" width="2.6" height="2" fill="#0a58d0" />
<rect x="627.8" y="457" width="2.6" height="2" fill="#0a58d0" />
<rect x="639.8" y="457" width="2.6" height="2" fill="#0a58d0" />
<rect x="652.8" y="457" width="2.6" height="2" fill="#0a58d0" />
<rect x="664.8" y="457" width="2.6" height="2" fill="#0a58d0" />
<rect x="677.8" y="457" width="2.6" height="2" fill="#0a58d0" />
<rect x="689.8" y="457" width="2.6" height="2" fill="#0a58d0" />
<rect x="701.8" y="457" width="2.6" height="2" fill="#0a58d0" />
<rect x="714.8" y="457" width="2.6" height="2" fill="#0a58d0" />
<rect x="726.8" y="457" width="2.6" height="2" fill="#0a58d0" />
<rect x="739.8" y="457" width="2.6" height="2" fill="#0a58d0" />
<rect x="751.8" y="457" width="2.6" height="2" fill="#0a58d0" />
<rect x="764.8" y="457" width="2.6" height="2" fill="#0a58d0" />
<rect x="776.8" y="457" width="2.6" height="2" fill="#0a58d0" />
<rect x="789.8" y="457" width="2.6" height="2" fill="#0a58d0" />
<rect x="801.8" y="457" width="2.6" height="2" fill="#0a58d0" />
<rect x="814.8" y="457" width="2.6" height="2" fill="#0a58d0" />
<rect x="826.8" y="457" width="2.6" height="2" fill="#0a58d0" />
<rect x="838.8" y="457" width="2.6" height="2" fill="#0a58d0" />
<rect x="462.5" y="452.3" width="2.8" height="4.699999999999989" fill="#c4c4c4" />
<rect x="470.1" y="449.3" width="2.8" height="7.699999999999989" fill="#c4c4c4" />
<rect x="477.5" y="451.4" width="2.8" height="5.600000000000023" fill="#c4c4c4" />
<rect x="485.0" y="450.5" width="2.8" height="6.5" fill="#c4c4c4" />
<rect x="492.5" y="452.3" width="2.8" height="4.699999999999989" fill="#c4c4c4" />
<rect x="515.0" y="451.4" width="2.8" height="5.600000000000023" fill="#c4c4c4" />
<rect x="530.2" y="449.3" width="2.8" height="7.699999999999989" fill="#c4c4c4" />
<rect x="545.0" y="451.2" width="2.8" height="5.800000000000011" fill="#c4c4c4" />
<rect x="559.8000000000001" y="448.2" width="2.8" height="8.800000000000011" fill="#c4c4c4" />
<rect x="602.5" y="440" width="2.8" height="17" fill="#c4c4c4" />
<rect x="627.7" y="450.2" width="2.8" height="6.800000000000011" fill="#c4c4c4" />
<rect x="652.6" y="448.5" width="2.8" height="8.5" fill="#c4c4c4" />
<rect x="677.4" y="450.4" width="2.8" height="6.600000000000023" fill="#c4c4c4" />
<rect x="702.2" y="444" width="2.8" height="13" fill="#c4c4c4" />
<rect x="714.6" y="452.3" width="2.8" height="4.699999999999989" fill="#c4c4c4" />
<rect x="727.1" y="444" width="2.8" height="13" fill="#c4c4c4" />
<rect x="739.6" y="452.5" width="2.8" height="4.5" fill="#c4c4c4" />
<rect x="752.0" y="428.9" width="2.8" height="28.100000000000023" fill="#c4c4c4" />
<rect x="764.4" y="449.2" width="2.8" height="7.800000000000011" fill="#c4c4c4" />
<rect x="776.8000000000001" y="449.2" width="2.8" height="7.800000000000011" fill="#c4c4c4" />
<rect x="789.2" y="452.5" width="2.8" height="4.5" fill="#c4c4c4" />
<rect x="801.9" y="419.5" width="2.8" height="37.5" fill="#c4c4c4" />
<rect x="826.6" y="433.8" width="2.8" height="23.19999999999999" fill="#c4c4c4" />
<rect x="839.5" y="449.2" width="2.8" height="7.800000000000011" fill="#c4c4c4" />
<rect x="846.8000000000001" y="451" width="2.8" height="6" fill="#c4c4c4" />
<rect x="454.6" y="455" width="2.8" height="2" fill="#c4c4c4" />
<rect x="500.6" y="455" width="2.8" height="2" fill="#c4c4c4" />
<rect x="507.6" y="455" width="2.8" height="2" fill="#c4c4c4" />
<rect x="521.6" y="455" width="2.8" height="2" fill="#c4c4c4" />
<rect x="536.6" y="455" width="2.8" height="2" fill="#c4c4c4" />
<rect x="551.6" y="455" width="2.8" height="2" fill="#c4c4c4" />
<rect x="567.6" y="455" width="2.8" height="2" fill="#c4c4c4" />
<rect x="577.6" y="455" width="2.8" height="2" fill="#c4c4c4" />
<rect x="582.6" y="455" width="2.8" height="2" fill="#c4c4c4" />
<rect x="589.6" y="455" width="2.8" height="2" fill="#c4c4c4" />
<rect x="614.6" y="455" width="2.8" height="2" fill="#c4c4c4" />
<rect x="639.6" y="455" width="2.8" height="2" fill="#c4c4c4" />
<rect x="689.6" y="455" width="2.8" height="2" fill="#c4c4c4" />
<rect x="845" y="457" width="173" height="2.2" fill="#3c3c3c" />
<rect x="690.0" y="454" width="2.2" height="2" fill="#c4c4c4" />
<rect x="692.5" y="453" width="2.2" height="3" fill="#c4c4c4" />
<rect x="695.0" y="455" width="2.2" height="1" fill="#c4c4c4" />
<rect x="697.5" y="455" width="2.2" height="1" fill="#c4c4c4" />
<rect x="697.5" y="456" width="2.2" height="1.2" fill="#0a58d0" />
<rect x="700.0" y="455" width="2.2" height="1" fill="#c4c4c4" />
<rect x="702.5" y="454" width="2.2" height="2" fill="#c4c4c4" />
<rect x="702.5" y="456" width="2.2" height="1.2" fill="#0a58d0" />
<rect x="705.0" y="453" width="2.2" height="3" fill="#c4c4c4" />
<rect x="705.0" y="456" width="2.2" height="1.2" fill="#0a58d0" />
<rect x="707.5" y="454" width="2.2" height="2" fill="#c4c4c4" />
<rect x="707.5" y="456" width="2.2" height="1.2" fill="#0a58d0" />
<rect x="710.0" y="453" width="2.2" height="3" fill="#c4c4c4" />
<rect x="710.0" y="456" width="2.2" height="1.2" fill="#0a58d0" />
<rect x="712.5" y="455" width="2.2" height="1" fill="#c4c4c4" />
<rect x="715.0" y="455" width="2.2" height="1" fill="#c4c4c4" />
<rect x="717.5" y="453" width="2.2" height="3" fill="#c4c4c4" />
<rect x="717.5" y="456" width="2.2" height="1.2" fill="#0a58d0" />
<rect x="720.0" y="454" width="2.2" height="2" fill="#c4c4c4" />
<rect x="720.0" y="456" width="2.2" height="1.2" fill="#0a58d0" />
<rect x="722.5" y="454" width="2.2" height="2" fill="#c4c4c4" />
<rect x="722.5" y="456" width="2.2" height="1.2" fill="#0a58d0" />
<rect x="725.0" y="454" width="2.2" height="2" fill="#c4c4c4" />
<rect x="727.5" y="454" width="2.2" height="2" fill="#c4c4c4" />
<rect x="730.0" y="454" width="2.2" height="2" fill="#c4c4c4" />
<rect x="730.0" y="456" width="2.2" height="1.2" fill="#0a58d0" />
<rect x="732.5" y="454" width="2.2" height="2" fill="#c4c4c4" />
<rect x="732.5" y="456" width="2.2" height="1.2" fill="#0a58d0" />
<rect x="735.0" y="455" width="2.2" height="1" fill="#c4c4c4" />
<rect x="737.5" y="454" width="2.2" height="2" fill="#c4c4c4" />
<rect x="737.5" y="456" width="2.2" height="1.2" fill="#0a58d0" />
<rect x="740.0" y="453" width="2.2" height="3" fill="#c4c4c4" />
<rect x="742.5" y="453" width="2.2" height="3" fill="#c4c4c4" />
<rect x="745.0" y="453" width="2.2" height="3" fill="#c4c4c4" />
<rect x="745.0" y="456" width="2.2" height="1.2" fill="#0a58d0" />
<rect x="747.5" y="454" width="2.2" height="2" fill="#c4c4c4" />
<rect x="750.0" y="454" width="2.2" height="2" fill="#c4c4c4" />
<rect x="750.0" y="456" width="2.2" height="1.2" fill="#0a58d0" />
<rect x="752.5" y="454" width="2.2" height="2" fill="#c4c4c4" />
<rect x="755.0" y="454" width="2.2" height="2" fill="#c4c4c4" />
<rect x="757.5" y="454" width="2.2" height="2" fill="#c4c4c4" />
<rect x="760.0" y="455" width="2.2" height="1" fill="#c4c4c4" />
<rect x="760.0" y="456" width="2.2" height="1.2" fill="#0a58d0" />
<rect x="762.5" y="453" width="2.2" height="3" fill="#c4c4c4" />
<rect x="762.5" y="456" width="2.2" height="1.2" fill="#0a58d0" />
<rect x="765.0" y="454" width="2.2" height="2" fill="#c4c4c4" />
<rect x="765.0" y="456" width="2.2" height="1.2" fill="#0a58d0" />
<rect x="767.5" y="453" width="2.2" height="3" fill="#c4c4c4" />
<rect x="767.5" y="456" width="2.2" height="1.2" fill="#0a58d0" />
<rect x="770.0" y="455" width="2.2" height="1" fill="#c4c4c4" />
<rect x="772.5" y="454" width="2.2" height="2" fill="#c4c4c4" />
<rect x="772.5" y="456" width="2.2" height="1.2" fill="#0a58d0" />
<rect x="775.0" y="454" width="2.2" height="2" fill="#c4c4c4" />
<rect x="777.5" y="453" width="2.2" height="3" fill="#c4c4c4" />
<rect x="777.5" y="456" width="2.2" height="1.2" fill="#0a58d0" />
<rect x="780.0" y="455" width="2.2" height="1" fill="#c4c4c4" />
<rect x="782.5" y="453" width="2.2" height="3" fill="#c4c4c4" />
<rect x="785.0" y="455" width="2.2" height="1" fill="#c4c4c4" />
<rect x="785.0" y="456" width="2.2" height="1.2" fill="#0a58d0" />
<rect x="787.5" y="454" width="2.2" height="2" fill="#c4c4c4" />
<rect x="790.0" y="453" width="2.2" height="3" fill="#c4c4c4" />
<rect x="790.0" y="456" width="2.2" height="1.2" fill="#0a58d0" />
<rect x="792.5" y="453" width="2.2" height="3" fill="#c4c4c4" />
<rect x="795.0" y="454" width="2.2" height="2" fill="#c4c4c4" />
<rect x="795.0" y="456" width="2.2" height="1.2" fill="#0a58d0" />
<rect x="797.5" y="453" width="2.2" height="3" fill="#c4c4c4" />
<rect x="797.5" y="456" width="2.2" height="1.2" fill="#0a58d0" />
<rect x="800.0" y="455" width="2.2" height="1" fill="#c4c4c4" />
<rect x="800.0" y="456" width="2.2" height="1.2" fill="#0a58d0" />
<rect x="802.5" y="454" width="2.2" height="2" fill="#c4c4c4" />
<rect x="805.0" y="454" width="2.2" height="2" fill="#c4c4c4" />
<rect x="807.5" y="453" width="2.2" height="3" fill="#c4c4c4" />
<rect x="807.5" y="456" width="2.2" height="1.2" fill="#0a58d0" />
<rect x="810.0" y="453" width="2.2" height="3" fill="#c4c4c4" />
<rect x="810.0" y="456" width="2.2" height="1.2" fill="#0a58d0" />
<rect x="812.5" y="453" width="2.2" height="3" fill="#c4c4c4" />
<rect x="812.5" y="456" width="2.2" height="1.2" fill="#0a58d0" />
<rect x="815.0" y="454" width="2.2" height="2" fill="#c4c4c4" />
<rect x="817.5" y="453" width="2.2" height="3" fill="#c4c4c4" />
<rect x="820.0" y="454" width="2.2" height="2" fill="#c4c4c4" />
<rect x="822.5" y="454" width="2.2" height="2" fill="#c4c4c4" />
<rect x="825.0" y="453" width="2.2" height="3" fill="#c4c4c4" />
<rect x="827.5" y="454" width="2.2" height="2" fill="#c4c4c4" />
<rect x="827.5" y="456" width="2.2" height="1.2" fill="#0a58d0" />
<rect x="830.0" y="454" width="2.2" height="2" fill="#c4c4c4" />
<rect x="830.0" y="456" width="2.2" height="1.2" fill="#0a58d0" />
<rect x="832.5" y="454" width="2.2" height="2" fill="#c4c4c4" />
<rect x="832.5" y="456" width="2.2" height="1.2" fill="#0a58d0" />
<rect x="835.0" y="454" width="2.2" height="2" fill="#c4c4c4" />
<rect x="835.0" y="456" width="2.2" height="1.2" fill="#0a58d0" />
<rect x="837.5" y="455" width="2.2" height="1" fill="#c4c4c4" />
<rect x="837.5" y="456" width="2.2" height="1.2" fill="#0a58d0" />
<rect x="840.0" y="454" width="2.2" height="2" fill="#c4c4c4" />
<rect x="842.5" y="454" width="2.2" height="2" fill="#c4c4c4" />
<rect x="845.0" y="452" width="2.3" height="5" fill="#0a58d0" />
<rect x="847.5" y="453" width="2.3" height="4" fill="#0a58d0" />
<rect x="850.0" y="452" width="2.3" height="5" fill="#0a58d0" />
<rect x="850.0" y="450.5" width="2.3" height="1.5" fill="#c4c4c4" />
<rect x="857.5" y="452" width="2.3" height="5" fill="#0a58d0" />
<rect x="860.0" y="454" width="2.3" height="3" fill="#0a58d0" />
<rect x="860.0" y="452.5" width="2.3" height="1.5" fill="#c4c4c4" />
<rect x="862.5" y="454" width="2.3" height="3" fill="#0a58d0" />
<rect x="862.5" y="452.5" width="2.3" height="1.5" fill="#c4c4c4" />
<rect x="867.5" y="452" width="2.3" height="5" fill="#0a58d0" />
<rect x="867.5" y="450.5" width="2.3" height="1.5" fill="#c4c4c4" />
<rect x="870.0" y="455" width="2.3" height="2" fill="#0a58d0" />
<rect x="870.0" y="453.5" width="2.3" height="1.5" fill="#c4c4c4" />
<rect x="872.5" y="455" width="2.3" height="2" fill="#0a58d0" />
<rect x="872.5" y="453.5" width="2.3" height="1.5" fill="#c4c4c4" />
<rect x="875.0" y="455" width="2.3" height="2" fill="#0a58d0" />
<rect x="875.0" y="453.5" width="2.3" height="1.5" fill="#c4c4c4" />
<rect x="877.5" y="455" width="2.3" height="2" fill="#0a58d0" />
<rect x="877.5" y="453.5" width="2.3" height="1.5" fill="#c4c4c4" />
<rect x="880.0" y="453" width="2.3" height="4" fill="#0a58d0" />
<rect x="880.0" y="451.5" width="2.3" height="1.5" fill="#c4c4c4" />
<rect x="882.5" y="455" width="2.3" height="2" fill="#0a58d0" />
<rect x="885.0" y="453" width="2.3" height="4" fill="#0a58d0" />
<rect x="885.0" y="451.5" width="2.3" height="1.5" fill="#c4c4c4" />
<rect x="887.5" y="455" width="2.3" height="2" fill="#0a58d0" />
<rect x="890.0" y="455" width="2.3" height="2" fill="#0a58d0" />
<rect x="892.5" y="454" width="2.3" height="3" fill="#0a58d0" />
<rect x="895.0" y="454" width="2.3" height="3" fill="#0a58d0" />
<rect x="895.0" y="452.5" width="2.3" height="1.5" fill="#c4c4c4" />
<rect x="897.5" y="454" width="2.3" height="3" fill="#0a58d0" />
<rect x="900.0" y="454" width="2.3" height="3" fill="#0a58d0" />
<rect x="900.0" y="452.5" width="2.3" height="1.5" fill="#c4c4c4" />
<rect x="902.5" y="454" width="2.3" height="3" fill="#0a58d0" />
<rect x="902.5" y="452.5" width="2.3" height="1.5" fill="#c4c4c4" />
<rect x="905.0" y="455" width="2.3" height="2" fill="#0a58d0" />
<rect x="907.5" y="452" width="2.3" height="5" fill="#0a58d0" />
<rect x="907.5" y="450.5" width="2.3" height="1.5" fill="#c4c4c4" />
<rect x="910.0" y="452" width="2.3" height="5" fill="#0a58d0" />
<rect x="910.0" y="450.5" width="2.3" height="1.5" fill="#c4c4c4" />
<rect x="912.5" y="455" width="2.3" height="2" fill="#0a58d0" />
<rect x="912.5" y="453.5" width="2.3" height="1.5" fill="#c4c4c4" />
<rect x="915.0" y="453" width="2.3" height="4" fill="#0a58d0" />
<rect x="915.0" y="451.5" width="2.3" height="1.5" fill="#c4c4c4" />
<rect x="917.5" y="452" width="2.3" height="5" fill="#0a58d0" />
<rect x="917.5" y="450.5" width="2.3" height="1.5" fill="#c4c4c4" />
<rect x="920.0" y="455" width="2.3" height="2" fill="#0a58d0" />
<rect x="922.5" y="454" width="2.3" height="3" fill="#0a58d0" />
<rect x="925.0" y="455" width="2.3" height="2" fill="#0a58d0" />
<rect x="927.5" y="454" width="2.3" height="3" fill="#0a58d0" />
<rect x="927.5" y="452.5" width="2.3" height="1.5" fill="#c4c4c4" />
<rect x="930.0" y="455" width="2.3" height="2" fill="#0a58d0" />
<rect x="930.0" y="453.5" width="2.3" height="1.5" fill="#c4c4c4" />
<rect x="932.5" y="455" width="2.3" height="2" fill="#0a58d0" />
<rect x="932.5" y="453.5" width="2.3" height="1.5" fill="#c4c4c4" />
<rect x="935.0" y="453" width="2.3" height="4" fill="#0a58d0" />
<rect x="935.0" y="451.5" width="2.3" height="1.5" fill="#c4c4c4" />
<rect x="937.5" y="455" width="2.3" height="2" fill="#0a58d0" />
<rect x="940.0" y="455" width="2.3" height="2" fill="#0a58d0" />
<rect x="942.5" y="454" width="2.3" height="3" fill="#0a58d0" />
<rect x="945.0" y="455" width="2.3" height="2" fill="#0a58d0" />
<rect x="945.0" y="453.5" width="2.3" height="1.5" fill="#c4c4c4" />
<rect x="947.5" y="454" width="2.3" height="3" fill="#0a58d0" />
<rect x="947.5" y="452.5" width="2.3" height="1.5" fill="#c4c4c4" />
<rect x="950.0" y="455" width="2.3" height="2" fill="#0a58d0" />
<rect x="952.5" y="454" width="2.3" height="3" fill="#0a58d0" />
<rect x="952.5" y="452.5" width="2.3" height="1.5" fill="#c4c4c4" />
<rect x="955.0" y="455" width="2.3" height="2" fill="#0a58d0" />
<rect x="957.5" y="454" width="2.3" height="3" fill="#0a58d0" />
<rect x="957.5" y="452.5" width="2.3" height="1.5" fill="#c4c4c4" />
<rect x="960.0" y="452" width="2.3" height="5" fill="#0a58d0" />
<rect x="962.5" y="454" width="2.3" height="3" fill="#0a58d0" />
<rect x="962.5" y="452.5" width="2.3" height="1.5" fill="#c4c4c4" />
<rect x="965.0" y="455" width="2.3" height="2" fill="#0a58d0" />
<rect x="965.0" y="453.5" width="2.3" height="1.5" fill="#c4c4c4" />
<rect x="967.5" y="455" width="2.3" height="2" fill="#0a58d0" />
<rect x="967.5" y="453.5" width="2.3" height="1.5" fill="#c4c4c4" />
<rect x="970.0" y="454" width="2.3" height="3" fill="#0a58d0" />
<rect x="972.5" y="453" width="2.3" height="4" fill="#0a58d0" />
<rect x="975.0" y="454" width="2.3" height="3" fill="#0a58d0" />
<rect x="977.5" y="454" width="2.3" height="3" fill="#0a58d0" />
<rect x="980.0" y="455" width="2.3" height="2" fill="#0a58d0" />
<rect x="982.5" y="455" width="2.3" height="2" fill="#0a58d0" />
<rect x="985.0" y="452" width="2.3" height="5" fill="#0a58d0" />
<rect x="987.5" y="454" width="2.3" height="3" fill="#0a58d0" />
<rect x="990.0" y="454" width="2.3" height="3" fill="#0a58d0" />
<rect x="992.5" y="454" width="2.3" height="3" fill="#0a58d0" />
<rect x="992.5" y="452.5" width="2.3" height="1.5" fill="#c4c4c4" />
<rect x="995.0" y="452" width="2.3" height="5" fill="#0a58d0" />
<rect x="995.0" y="450.5" width="2.3" height="1.5" fill="#c4c4c4" />
<rect x="997.5" y="454" width="2.3" height="3" fill="#0a58d0" />
<rect x="1000.0" y="455" width="2.3" height="2" fill="#0a58d0" />
<rect x="1002.5" y="455" width="2.3" height="2" fill="#0a58d0" />
<rect x="1005.0" y="455" width="2.3" height="2" fill="#0a58d0" />
<rect x="1005.0" y="453.5" width="2.3" height="1.5" fill="#c4c4c4" />
<rect x="1007.5" y="454" width="2.3" height="3" fill="#0a58d0" />
<rect x="1010.0" y="455" width="2.3" height="2" fill="#0a58d0" />
<rect x="1012.5" y="453" width="2.3" height="4" fill="#0a58d0" />
<rect x="1015.0" y="452" width="2.3" height="5" fill="#0a58d0" />
<rect x="876.5" y="421.7" width="3" height="35.30000000000001" fill="#c4c4c4" />
<rect x="876.5" y="431.5" width="3" height="25.5" fill="#0a58d0" />
<rect x="881.7" y="446.5" width="3" height="10.5" fill="#c4c4c4" />
<rect x="881.7" y="449" width="3" height="8" fill="#0a58d0" />
<rect x="889.5" y="434.2" width="3" height="22.80000000000001" fill="#c4c4c4" />
<rect x="889.5" y="437" width="3" height="20" fill="#0a58d0" />
<rect x="902.0" y="378.2" width="3" height="78.80000000000001" fill="#c4c4c4" />
<rect x="902.0" y="385" width="3" height="72" fill="#0a58d0" />
<rect x="911.0" y="445" width="3" height="12" fill="#c4c4c4" />
<rect x="911.0" y="447" width="3" height="10" fill="#0a58d0" />
<rect x="914.5" y="436" width="3" height="21" fill="#c4c4c4" />
<rect x="914.5" y="439" width="3" height="18" fill="#0a58d0" />
<rect x="921.5" y="447.5" width="3" height="9.5" fill="#c4c4c4" />
<rect x="921.5" y="449.5" width="3" height="7.5" fill="#0a58d0" />
<rect x="926.7" y="401.8" width="3" height="55.19999999999999" fill="#c4c4c4" />
<rect x="926.7" y="404" width="3" height="53" fill="#0a58d0" />
<rect x="932.0" y="447" width="3" height="10" fill="#c4c4c4" />
<rect x="932.0" y="449" width="3" height="8" fill="#0a58d0" />
<rect x="939.5" y="444.5" width="3" height="12.5" fill="#c4c4c4" />
<rect x="939.5" y="447" width="3" height="10" fill="#0a58d0" />
<rect x="951.8" y="390.2" width="3" height="66.80000000000001" fill="#c4c4c4" />
<rect x="951.8" y="393" width="3" height="64" fill="#0a58d0" />
<rect x="964.2" y="446.5" width="3" height="10.5" fill="#c4c4c4" />
<rect x="964.2" y="449" width="3" height="8" fill="#0a58d0" />
<rect x="976.5" y="415" width="3" height="42" fill="#c4c4c4" />
<rect x="976.5" y="418" width="3" height="39" fill="#0a58d0" />
<rect x="988.9" y="450" width="3" height="7" fill="#c4c4c4" />
<rect x="988.9" y="452" width="3" height="5" fill="#0a58d0" />
<rect x="1001.2" y="406" width="3" height="51" fill="#c4c4c4" />
<rect x="1001.2" y="408.5" width="3" height="48.5" fill="#0a58d0" />
<rect x="1006.5" y="453" width="3" height="4" fill="#c4c4c4" />
<rect x="1006.5" y="454.5" width="3" height="2.5" fill="#0a58d0" />
<rect x="826.5" y="451" width="3" height="6" fill="#c4c4c4" />
<rect x="826.5" y="451" width="3" height="6" fill="#0a58d0" />
<rect x="826.6" y="451" width="2.8" height="6" fill="#0a58d0" />
<rect x="1032.7" y="452.5" width="2.6" height="4.5" fill="#c4c4c4" />
<rect x="1032.7" y="455" width="2.6" height="2" fill="#0a58d0" />
<rect x="1055.7" y="452.5" width="2.6" height="4.5" fill="#c4c4c4" />
<rect x="1055.7" y="455" width="2.6" height="2" fill="#0a58d0" />
<rect x="1081.7" y="452.5" width="2.6" height="4.5" fill="#c4c4c4" />
<rect x="1081.7" y="455" width="2.6" height="2" fill="#0a58d0" />
<rect x="1128.7" y="452.5" width="2.6" height="4.5" fill="#c4c4c4" />
<rect x="1128.7" y="455" width="2.6" height="2" fill="#0a58d0" />
<rect x="1218.7" y="452.5" width="2.6" height="4.5" fill="#c4c4c4" />
<rect x="1218.7" y="455" width="2.6" height="2" fill="#0a58d0" />
<rect x="852.5" y="276.9" width="2.6" height="180" fill="#c4c4c4" />
<rect x="852.5" y="386.7" width="2.6" height="70.3" fill="#0a58d0" />
<line x1="853.8" y1="187" x2="853.8" y2="457" stroke="#1a7cff" stroke-width="1.8" stroke-dasharray="5 5"/>
<line x1="858.7" y1="187" x2="858.7" y2="457" stroke="#e0109a" stroke-width="1.8" stroke-dasharray="5 5.4"/>
<line x1="865" y1="187" x2="865" y2="457" stroke="#ff9500" stroke-width="2.2" />
<rect x="827.7" y="196" width="36.6" height="16.1" fill="#ff9500" />
<text x="836.30" y="207.80" font-size="10.90" fill="#201000" stroke="#201000" stroke-width="0.1" font-weight="normal" textLength="19.90" lengthAdjust="spacingAndGlyphs">Last</text>
<rect x="797.3" y="222.7" width="62.3" height="16.2" fill="#d0068e" />
<text x="806.00" y="234.50" font-size="11.19" fill="#ffffff" stroke="#ffffff" stroke-width="0.45" font-weight="normal" textLength="43.99" lengthAdjust="spacingAndGlyphs">Max Pain</text>
<rect x="853.3" y="249.7" width="73.4" height="16.2" fill="#0a7cff" />
<text x="862.00" y="261.60" font-size="11.05" fill="#ffffff" stroke="#ffffff" stroke-width="0.45" font-weight="normal" textLength="54.98" lengthAdjust="spacingAndGlyphs">Max Call OI</text>
<rect x="2" y="510" width="1318" height="20" fill="#232323" />
<text x="3.00" y="525.10" font-size="14.68" fill="#d8d8d8" stroke="#d8d8d8" stroke-width="0.3" font-weight="normal" textLength="52.02" lengthAdjust="spacingAndGlyphs">Options</text>
<rect x="2" y="530.5" width="1308" height="20" fill="#262626" />
<line x1="2" y1="530.5" x2="1310" y2="530.5" stroke="#3c3c3c" stroke-width="1" />
<line x1="2" y1="550.5" x2="1310" y2="550.5" stroke="#2a2a2a" stroke-width="1" />
<line x1="265.5" y1="530.5" x2="265.5" y2="628" stroke="#3c3c3c" stroke-width="1" />
<line x1="354.5" y1="530.5" x2="354.5" y2="628" stroke="#3c3c3c" stroke-width="1" />
<line x1="444.5" y1="530.5" x2="444.5" y2="628" stroke="#3c3c3c" stroke-width="1" />
<line x1="558.5" y1="530.5" x2="558.5" y2="628" stroke="#3c3c3c" stroke-width="1" />
<line x1="672.5" y1="530.5" x2="672.5" y2="628" stroke="#3c3c3c" stroke-width="1" />
<line x1="761.5" y1="530.5" x2="761.5" y2="628" stroke="#3c3c3c" stroke-width="1" />
<line x1="851.5" y1="530.5" x2="851.5" y2="628" stroke="#3c3c3c" stroke-width="1" />
<line x1="991.5" y1="530.5" x2="991.5" y2="628" stroke="#3c3c3c" stroke-width="1" />
<line x1="1131.5" y1="530.5" x2="1131.5" y2="628" stroke="#3c3c3c" stroke-width="1" />
<line x1="1220.5" y1="530.5" x2="1220.5" y2="628" stroke="#3c3c3c" stroke-width="1" />
<line x1="2" y1="628.5" x2="1320" y2="628.5" stroke="#262626" stroke-width="1" />
<rect x="2" y="632" width="1318" height="8" fill="#1e1e1e" />
<line x1="171.5" y1="632" x2="171.5" y2="640" stroke="#333" stroke-width="1" />
<line x1="748.5" y1="632" x2="748.5" y2="640" stroke="#333" stroke-width="1" />
<text x="37.00" y="545.00" font-size="15.99" fill="#d8d8d8" stroke="#d8d8d8" stroke-width="0.3" font-weight="normal" textLength="40.00" lengthAdjust="spacingAndGlyphs">Ticker</text>
<text x="304.00" y="545.00" font-size="15.99" fill="#d8d8d8" stroke="#d8d8d8" stroke-width="0.3" font-weight="normal" textLength="48.80" lengthAdjust="spacingAndGlyphs">Last Px</text>
<text x="417.00" y="545.00" font-size="15.99" fill="#d8d8d8" stroke="#d8d8d8" stroke-width="0.3" font-weight="normal" textLength="25.69" lengthAdjust="spacingAndGlyphs">Mny</text>
<text x="491.00" y="545.00" font-size="15.99" fill="#d8d8d8" stroke="#d8d8d8" stroke-width="0.3" font-weight="normal" textLength="64.96" lengthAdjust="spacingAndGlyphs">Vol (Ntnl)</text>
<text x="609.50" y="545.00" font-size="15.99" fill="#d8d8d8" stroke="#d8d8d8" stroke-width="0.3" font-weight="normal" textLength="59.77" lengthAdjust="spacingAndGlyphs">OI (Ntnl)</text>
<text x="716.20" y="545.00" font-size="15.99" fill="#d8d8d8" stroke="#d8d8d8" stroke-width="0.3" font-weight="normal" textLength="43.18" lengthAdjust="spacingAndGlyphs">Vol/OI</text>
<text x="805.70" y="545.00" font-size="15.99" fill="#d8d8d8" stroke="#d8d8d8" stroke-width="0.3" font-weight="normal" textLength="42.98" lengthAdjust="spacingAndGlyphs">%TotOI</text>
<text x="897.00" y="545.00" font-size="15.99" fill="#ff9200" stroke="#ff9200" stroke-width="0.3" font-weight="normal" textLength="79.73" lengthAdjust="spacingAndGlyphs">Delta (Ntnl)</text>
<text x="1034.00" y="545.00" font-size="15.99" fill="#d8d8d8" stroke="#d8d8d8" stroke-width="0.3" font-weight="normal" textLength="94.98" lengthAdjust="spacingAndGlyphs">Gamma (Ntnl)</text>
<text x="1204.80" y="545.00" font-size="15.99" fill="#d8d8d8" stroke="#d8d8d8" stroke-width="0.3" font-weight="normal" textLength="13.80" lengthAdjust="spacingAndGlyphs">IV</text>
<text x="1262.50" y="545.00" font-size="15.99" fill="#d8d8d8" stroke="#d8d8d8" stroke-width="0.3" font-weight="normal" textLength="45.28" lengthAdjust="spacingAndGlyphs">IV%Chg</text>
<text x="24.00" y="565.30" font-size="14.54" fill="#c8d0e0" stroke="#c8d0e0" stroke-width="0.3" font-weight="normal" textLength="8.49" lengthAdjust="spacingAndGlyphs">1)</text>
<text x="36.50" y="565.30" font-size="15.99" fill="#f2e27a" stroke="#f2e27a" stroke-width="0.3" font-weight="normal" textLength="169.47" lengthAdjust="spacingAndGlyphs">SPX US 04/19/24 P5000</text>
<text x="316.15" y="565.30" font-size="15.99" fill="#f2e27a" stroke="#f2e27a" stroke-width="0.3" font-weight="normal" textLength="36.81" lengthAdjust="spacingAndGlyphs">13.55</text>
<text x="414.39" y="565.30" font-size="15.99" fill="#f2e27a" stroke="#f2e27a" stroke-width="0.3" font-weight="normal" textLength="28.63" lengthAdjust="spacingAndGlyphs">99.6</text>
<text x="518.53" y="565.30" font-size="15.99" fill="#f2e27a" stroke="#f2e27a" stroke-width="0.3" font-weight="normal" textLength="38.44" lengthAdjust="spacingAndGlyphs">5.89B</text>
<text x="623.87" y="565.30" font-size="15.99" fill="#f2e27a" stroke="#f2e27a" stroke-width="0.3" font-weight="normal" textLength="46.62" lengthAdjust="spacingAndGlyphs">45.61B</text>
<text x="731.39" y="565.30" font-size="15.99" fill="#f2e27a" stroke="#f2e27a" stroke-width="0.3" font-weight="normal" textLength="28.63" lengthAdjust="spacingAndGlyphs">0.13</text>
<text x="821.39" y="565.30" font-size="15.99" fill="#f2e27a" stroke="#f2e27a" stroke-width="0.3" font-weight="normal" textLength="28.63" lengthAdjust="spacingAndGlyphs">3.18</text>
<text x="938.44" y="565.30" font-size="15.99" fill="#f2e27a" stroke="#f2e27a" stroke-width="0.3" font-weight="normal" textLength="51.52" lengthAdjust="spacingAndGlyphs">-15.68B</text>
<text x="1082.97" y="565.30" font-size="15.99" fill="#f2e27a" stroke="#f2e27a" stroke-width="0.3" font-weight="normal" textLength="46.62" lengthAdjust="spacingAndGlyphs">14.22B</text>
<text x="1182.15" y="565.30" font-size="15.99" fill="#f2e27a" stroke="#f2e27a" stroke-width="0.3" font-weight="normal" textLength="36.81" lengthAdjust="spacingAndGlyphs">14.33</text>
<text x="1262.99" y="565.30" font-size="15.99" fill="#f2e27a" stroke="#f2e27a" stroke-width="0.3" font-weight="normal" textLength="44.99" lengthAdjust="spacingAndGlyphs">100.00</text>
<text x="24.00" y="585.50" font-size="14.54" fill="#c8d0e0" stroke="#c8d0e0" stroke-width="0.3" font-weight="normal" textLength="8.49" lengthAdjust="spacingAndGlyphs">2)</text>
<text x="36.50" y="585.50" font-size="15.99" fill="#f2e27a" stroke="#f2e27a" stroke-width="0.3" font-weight="normal" textLength="169.47" lengthAdjust="spacingAndGlyphs">SPX US 04/19/24 P5100</text>
<text x="316.15" y="585.50" font-size="15.99" fill="#f2e27a" stroke="#f2e27a" stroke-width="0.3" font-weight="normal" textLength="36.81" lengthAdjust="spacingAndGlyphs">69.69</text>
<text x="406.15" y="585.50" font-size="15.99" fill="#f2e27a" stroke="#f2e27a" stroke-width="0.3" font-weight="normal" textLength="36.81" lengthAdjust="spacingAndGlyphs">101.5</text>
<text x="518.53" y="585.50" font-size="15.99" fill="#f2e27a" stroke="#f2e27a" stroke-width="0.3" font-weight="normal" textLength="38.44" lengthAdjust="spacingAndGlyphs">8.57B</text>
<text x="623.87" y="585.50" font-size="15.99" fill="#f2e27a" stroke="#f2e27a" stroke-width="0.3" font-weight="normal" textLength="46.62" lengthAdjust="spacingAndGlyphs">16.59B</text>
<text x="731.39" y="585.50" font-size="15.99" fill="#f2e27a" stroke="#f2e27a" stroke-width="0.3" font-weight="normal" textLength="28.63" lengthAdjust="spacingAndGlyphs">0.52</text>
<text x="821.39" y="585.50" font-size="15.99" fill="#f2e27a" stroke="#f2e27a" stroke-width="0.3" font-weight="normal" textLength="28.63" lengthAdjust="spacingAndGlyphs">1.16</text>
<text x="938.44" y="585.50" font-size="15.99" fill="#f2e27a" stroke="#f2e27a" stroke-width="0.3" font-weight="normal" textLength="51.52" lengthAdjust="spacingAndGlyphs">-14.75B</text>
<text x="1091.13" y="585.50" font-size="15.99" fill="#f2e27a" stroke="#f2e27a" stroke-width="0.3" font-weight="normal" textLength="38.44" lengthAdjust="spacingAndGlyphs">2.55B</text>
<text x="1182.15" y="585.50" font-size="15.99" fill="#f2e27a" stroke="#f2e27a" stroke-width="0.3" font-weight="normal" textLength="36.81" lengthAdjust="spacingAndGlyphs">14.94</text>
<text x="1262.99" y="585.50" font-size="15.99" fill="#f2e27a" stroke="#f2e27a" stroke-width="0.3" font-weight="normal" textLength="44.99" lengthAdjust="spacingAndGlyphs">100.00</text>
<text x="24.00" y="605.40" font-size="14.54" fill="#c8d0e0" stroke="#c8d0e0" stroke-width="0.3" font-weight="normal" textLength="8.49" lengthAdjust="spacingAndGlyphs">3)</text>
<text x="36.50" y="605.40" font-size="15.99" fill="#f2e27a" stroke="#f2e27a" stroke-width="0.3" font-weight="normal" textLength="169.47" lengthAdjust="spacingAndGlyphs">SPX US 04/19/24 P5200</text>
<text x="307.99" y="605.40" font-size="15.99" fill="#f2e27a" stroke="#f2e27a" stroke-width="0.3" font-weight="normal" textLength="44.99" lengthAdjust="spacingAndGlyphs">176.50</text>
<text x="406.15" y="605.40" font-size="15.99" fill="#f2e27a" stroke="#f2e27a" stroke-width="0.3" font-weight="normal" textLength="36.81" lengthAdjust="spacingAndGlyphs">103.5</text>
<text x="507.94" y="605.40" font-size="15.99" fill="#f2e27a" stroke="#f2e27a" stroke-width="0.3" font-weight="normal" textLength="49.06" lengthAdjust="spacingAndGlyphs">56.25M</text>
<text x="623.87" y="605.40" font-size="15.99" fill="#f2e27a" stroke="#f2e27a" stroke-width="0.3" font-weight="normal" textLength="46.62" lengthAdjust="spacingAndGlyphs">14.88B</text>
<text x="731.39" y="605.40" font-size="15.99" fill="#f2e27a" stroke="#f2e27a" stroke-width="0.3" font-weight="normal" textLength="28.63" lengthAdjust="spacingAndGlyphs">0.00</text>
<text x="821.39" y="605.40" font-size="15.99" fill="#f2e27a" stroke="#f2e27a" stroke-width="0.3" font-weight="normal" textLength="28.63" lengthAdjust="spacingAndGlyphs">1.04</text>
<text x="946.68" y="605.40" font-size="15.99" fill="#f2e27a" stroke="#f2e27a" stroke-width="0.3" font-weight="normal" textLength="43.34" lengthAdjust="spacingAndGlyphs">-14.7B</text>
<text x="1072.38" y="605.40" font-size="15.99" fill="#f2e27a" stroke="#f2e27a" stroke-width="0.3" font-weight="normal" textLength="57.25" lengthAdjust="spacingAndGlyphs">309.41M</text>
<text x="1182.15" y="605.40" font-size="15.99" fill="#f2e27a" stroke="#f2e27a" stroke-width="0.3" font-weight="normal" textLength="36.81" lengthAdjust="spacingAndGlyphs">18.57</text>
<text x="1262.99" y="605.40" font-size="15.99" fill="#f2e27a" stroke="#f2e27a" stroke-width="0.3" font-weight="normal" textLength="44.99" lengthAdjust="spacingAndGlyphs">100.00</text>
<text x="24.00" y="625.20" font-size="14.54" fill="#c8d0e0" stroke="#c8d0e0" stroke-width="0.3" font-weight="normal" textLength="8.49" lengthAdjust="spacingAndGlyphs">4)</text>
<text x="36.50" y="625.20" font-size="15.99" fill="#f2e27a" stroke="#f2e27a" stroke-width="0.3" font-weight="normal" textLength="169.47" lengthAdjust="spacingAndGlyphs">SPX US 04/19/24 P5300</text>
<text x="307.99" y="625.20" font-size="15.99" fill="#f2e27a" stroke="#f2e27a" stroke-width="0.3" font-weight="normal" textLength="44.99" lengthAdjust="spacingAndGlyphs">231.73</text>
<text x="406.15" y="625.20" font-size="15.99" fill="#f2e27a" stroke="#f2e27a" stroke-width="0.3" font-weight="normal" textLength="36.81" lengthAdjust="spacingAndGlyphs">105.5</text>
<text x="548.84" y="625.20" font-size="15.99" fill="#f2e27a" stroke="#f2e27a" stroke-width="0.3" font-weight="normal" textLength="8.18" lengthAdjust="spacingAndGlyphs">0</text>
<text x="623.87" y="625.20" font-size="15.99" fill="#f2e27a" stroke="#f2e27a" stroke-width="0.3" font-weight="normal" textLength="46.62" lengthAdjust="spacingAndGlyphs">12.25B</text>
<text x="731.39" y="625.20" font-size="15.99" fill="#f2e27a" stroke="#f2e27a" stroke-width="0.3" font-weight="normal" textLength="28.63" lengthAdjust="spacingAndGlyphs">0.00</text>
<text x="821.39" y="625.20" font-size="15.99" fill="#f2e27a" stroke="#f2e27a" stroke-width="0.3" font-weight="normal" textLength="28.63" lengthAdjust="spacingAndGlyphs">0.85</text>
<text x="938.44" y="625.20" font-size="15.99" fill="#f2e27a" stroke="#f2e27a" stroke-width="0.3" font-weight="normal" textLength="51.52" lengthAdjust="spacingAndGlyphs">-12.05B</text>
<text x="1072.38" y="625.20" font-size="15.99" fill="#f2e27a" stroke="#f2e27a" stroke-width="0.3" font-weight="normal" textLength="57.25" lengthAdjust="spacingAndGlyphs">196.27M</text>
<text x="1182.15" y="625.20" font-size="15.99" fill="#f2e27a" stroke="#f2e27a" stroke-width="0.3" font-weight="normal" textLength="36.81" lengthAdjust="spacingAndGlyphs">30.10</text>
<text x="1262.99" y="625.20" font-size="15.99" fill="#f2e27a" stroke="#f2e27a" stroke-width="0.3" font-weight="normal" textLength="44.99" lengthAdjust="spacingAndGlyphs">100.00</text>
<path d="M987,533.5 V546.5 M984,538 L987,533.6 L990,538" fill="none" stroke="#e0e8f0" stroke-width="1.3"/>
<rect x="1310" y="530.5" width="10" height="97.7" fill="#1b1b1b" />
<path d="M1312.3,542.5 L1316,537.6 L1319.7,542.5 Z" fill="#e8e8e8"/>
<rect x="1311" y="550" width="8.6" height="11.8" fill="#5a5a5a" />
<path d="M1312.3,617.6 L1316,622.5 L1319.7,617.6 Z" fill="#e8e8e8"/>
</svg>
</body></html>
